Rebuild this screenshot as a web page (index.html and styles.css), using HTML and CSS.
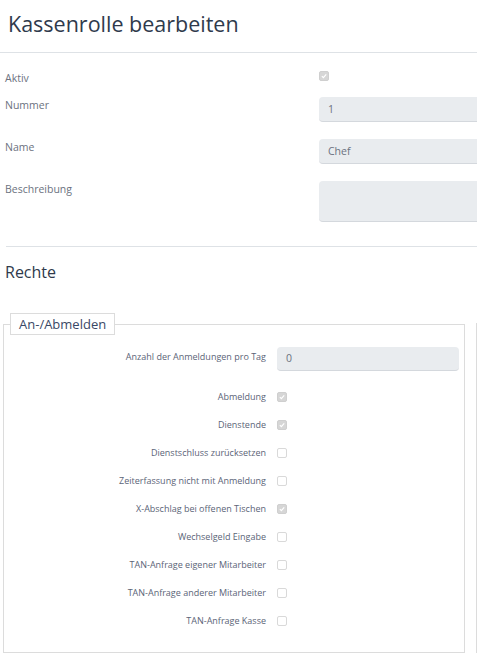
FILE: index.html
```html
<!DOCTYPE html>
<html lang="de">
<head>
<meta charset="utf-8">
<title>Kassenrolle bearbeiten</title>
<link rel="stylesheet" href="styles.css">
</head>
<body>
<header class="page-header">
  <h1 class="title">Kassenrolle bearbeiten</h1>
</header>

<section class="base-form">
  <div class="row row-check">
    <div class="label">Aktiv</div>
    <span class="cb checked"><svg viewBox="0 0 10 10"><path d="M2.3 5.2 L4.2 7 L7.8 3" /></svg></span>
  </div>
  <div class="row">
    <div class="label">Nummer</div>
    <div class="input">1</div>
  </div>
  <div class="row">
    <div class="label">Name</div>
    <div class="input">Chef</div>
  </div>
  <div class="row">
    <div class="label">Beschreibung</div>
    <div class="input textarea"></div>
  </div>
</section>

<hr class="divider">

<h2 class="section-title">Rechte</h2>

<div class="rights">
  <fieldset class="group">
    <legend class="legend">An-/Abmelden</legend>
    <div class="g-row g-input-row">
      <div class="g-label">Anzahl der Anmeldungen pro Tag</div>
      <div class="g-input">0</div>
    </div>
    <div class="g-list">
      <div class="g-row g-check"><div class="g-label">Abmeldung</div><span class="cb checked"><svg viewBox="0 0 10 10"><path d="M2.3 5.2 L4.2 7 L7.8 3" /></svg></span></div>
      <div class="g-row g-check"><div class="g-label">Dienstende</div><span class="cb checked"><svg viewBox="0 0 10 10"><path d="M2.3 5.2 L4.2 7 L7.8 3" /></svg></span></div>
      <div class="g-row g-check"><div class="g-label">Dienstschluss zurücksetzen</div><span class="cb"></span></div>
      <div class="g-row g-check"><div class="g-label">Zeiterfassung nicht mit Anmeldung</div><span class="cb"></span></div>
      <div class="g-row g-check"><div class="g-label">X-Abschlag bei offenen Tischen</div><span class="cb checked"><svg viewBox="0 0 10 10"><path d="M2.3 5.2 L4.2 7 L7.8 3" /></svg></span></div>
      <div class="g-row g-check"><div class="g-label">Wechselgeld Eingabe</div><span class="cb"></span></div>
      <div class="g-row g-check"><div class="g-label">TAN-Anfrage eigener Mitarbeiter</div><span class="cb"></span></div>
      <div class="g-row g-check"><div class="g-label">TAN-Anfrage anderer Mitarbeiter</div><span class="cb"></span></div>
      <div class="g-row g-check"><div class="g-label">TAN-Anfrage Kasse</div><span class="cb"></span></div>
    </div>
  </fieldset>
  <div class="group-next"></div>
</div>
</body>
</html>
```

FILE: styles.css
```css
html {
  overflow: hidden;
}
body {
  margin: 0;
  width: 477px;
  overflow: hidden;
  font-family: "Open Sans", "Noto Sans", sans-serif;
  color: #6b7280;
  background: #ffffff;
}

.page-header {
  padding: 11px 8px 15px;
  border-bottom: 1px solid #dee2e6;
}
.title {
  margin: 0;
  font-size: 21.5px;
  line-height: 26px;
  font-weight: 400;
  color: #2f3a4c;
}

.base-form {
  padding: 18px 0 0 5px;
  overflow: hidden;
}
.row {
  display: flex;
  align-items: flex-start;
  margin-bottom: 17px;
}
.row-check {
  height: 10px;
  margin-bottom: 16px;
}
.label {
  width: 314px;
  flex: none;
  font-size: 10.5px;
  line-height: 16px;
  color: #6b7280;
}
.row-check .label {
  margin-top: -1px;
}
.input {
  flex: none;
  width: 420px;
  height: 25px;
  box-sizing: border-box;
  background: #e9ecef;
  border-bottom: 1px solid #d4d8dd;
  border-radius: 4px;
  padding-left: 9px;
  font-size: 10.5px;
  line-height: 24px;
  color: #6b7280;
}
.textarea {
  height: 41px;
}

.cb {
  flex: none;
  width: 10px;
  height: 10px;
  box-sizing: border-box;
  border: 1px solid #d9d9d9;
  border-radius: 2px;
  background: #ffffff;
  display: block;
}
.cb svg {
  display: block;
  width: 8px;
  height: 8px;
}
.cb path {
  fill: none;
  stroke: #ffffff;
  stroke-width: 1.5;
}
.cb.checked {
  background: #d6d6d6;
  border-color: #cfcfcf;
}

.divider {
  margin: 7px 0 0 6px;
  border: 0;
  border-top: 1px solid #dee2e6;
  height: 0;
}

.section-title {
  margin: 14px 0 0 5px;
  font-size: 16px;
  line-height: 22px;
  font-weight: 400;
  color: #2f3a4c;
}

.rights {
  display: flex;
  align-items: stretch;
  gap: 11px;
  margin-top: 30px;
  padding-left: 3px;
}
.group {
  flex: none;
  margin: 0;
  width: 462px;
  box-sizing: border-box;
  border: 1px solid #dcdcdc;
  padding: 12px 5px 17px 6px;
  min-width: 0;
}
.group-next {
  flex: none;
  width: 300px;
  margin-top: 10px;
  border-left: 1px solid #dcdcdc;
  border-top: 1px solid #dcdcdc;
}
.legend {
  border: 1px solid #dcdcdc;
  padding: 0 8px;
  font-size: 13px;
  line-height: 20px;
  color: #3a4866;
}

.g-row {
  display: flex;
  align-items: center;
}
.g-input-row {
  align-items: flex-start;
  margin-bottom: 12px;
}
.g-label {
  width: 256px;
  flex: none;
  text-align: right;
  margin-right: 11px;
  font-size: 9px;
  line-height: 14px;
  color: #5b6477;
}
.g-input-row .g-label {
  padding-top: 3px;
}
.g-input {
  flex: 1;
  height: 24px;
  box-sizing: border-box;
  background: #e9ecef;
  border-bottom: 1px solid #d4d8dd;
  border-radius: 4px;
  padding-left: 9px;
  font-size: 10.5px;
  line-height: 23px;
  color: #6b7280;
}
.g-check {
  height: 28px;
}
```
